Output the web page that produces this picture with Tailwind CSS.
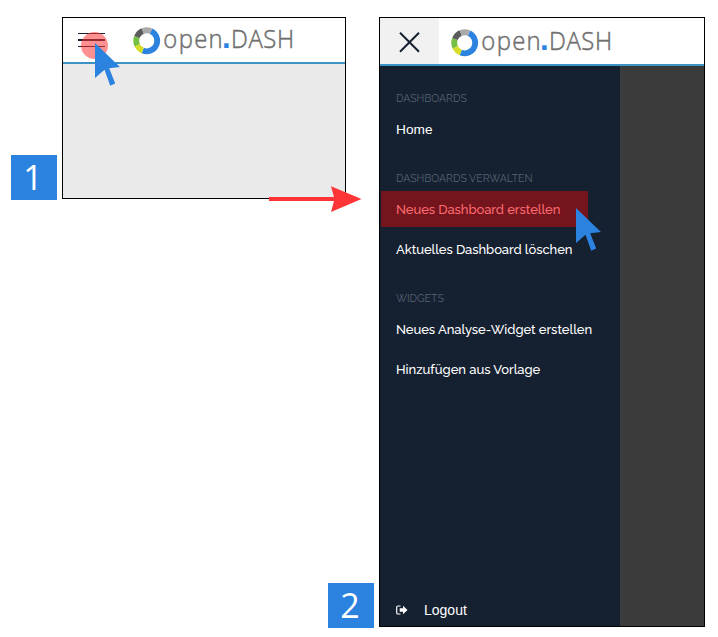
<!DOCTYPE html>
<html lang="de">
<head>
<meta charset="utf-8">
<title>open.DASH</title>
<script src="https://cdn.jsdelivr.net/npm/@tailwindcss/browser@4"></script>
</head>
<body class="bg-white overflow-hidden">
<svg class="hidden">
  <defs>
    <symbol id="logo" viewBox="0 0 166 36">
      <g fill="none" stroke-width="5.8">
        <circle cx="14.7" cy="17.8" r="10.5" pathLength="360" stroke="#2b83df" stroke-dasharray="178 182" transform="rotate(-66 14.7 17.8)"/>
        <circle cx="14.7" cy="17.8" r="10.5" pathLength="360" stroke="#d5dd28" stroke-dasharray="43 317" transform="rotate(112 14.7 17.8)"/>
        <circle cx="14.7" cy="17.8" r="10.5" pathLength="360" stroke="#75c043" stroke-dasharray="46 314" transform="rotate(155 14.7 17.8)"/>
        <circle cx="14.7" cy="17.8" r="10.5" pathLength="360" stroke="#5c5c5c" stroke-dasharray="47 313" transform="rotate(201 14.7 17.8)"/>
        <circle cx="14.7" cy="17.8" r="10.5" pathLength="360" stroke="#a9a9a9" stroke-dasharray="46 314" transform="rotate(248 14.7 17.8)"/>
      </g>
      <g font-family="'Open Sans','Noto Sans',sans-serif" font-weight="300" font-size="26.5" fill="#6f6f6f" stroke="#6f6f6f" stroke-width=".5">
        <text transform="translate(31.3 25) scale(.9 1)" textLength="66" lengthAdjust="spacing">open</text>
        <text x="90" y="25" font-family="'Liberation Sans',sans-serif" font-weight="700" font-size="31" fill="#2b83df" stroke="none">.</text>
        <text transform="translate(98.9 25) scale(.9 1)" textLength="70.3" lengthAdjust="spacing">DASH</text>
      </g>
    </symbol>
    <symbol id="cursor" viewBox="0 0 26 44">
      <path d="M0 0 25 24 14.2 25.3 20.2 40.5 15.2 42.7 9.5 26.8 0 35Z" fill="#2b83df"/>
    </symbol>
  </defs>
</svg>
<main class="relative flex w-[718px] h-[637px] pt-[17px] pl-[11px] items-start font-['Open_Sans','Noto_Sans',sans-serif]">
  <div class="mt-[138px] w-[46px] h-[45px] shrink-0 bg-[#2b83df] text-white text-[34px] leading-[45px] text-center pr-[2px]">1</div>

  <section class="ml-[5px] w-[284px] h-[182px] shrink-0 border border-black bg-[#eaeaea] flex flex-col">
    <header class="h-[46px] bg-white border-b-2 border-[#3a93c4] flex items-start">
      <svg class="mt-[14px] ml-[15px] w-[27px] h-[16px] shrink-0" viewBox="0 0 27 16"><path d="M0 1.5H27M0 14.5H27" stroke="#152030"/><path d="M0 8H27" stroke="#152030" stroke-width="2"/></svg>
      <svg class="mt-[5px] ml-[27px] w-[166px] h-[36px] shrink-0"><use href="#logo"/></svg>
    </header>
  </section>

  <div class="-ml-[18px] mt-[566px] w-[46px] h-[45px] shrink-0 bg-[#2b83df] text-white text-[34px] leading-[45px] text-center pr-[2px]">2</div>

  <section class="ml-[5px] w-[326px] h-[610px] shrink-0 border border-black bg-[#3b3b3b] flex flex-col">
    <header class="h-[48px] shrink-0 bg-white border-b-2 border-[#3a93c4] flex">
      <div class="w-[59px] bg-[#f1f1f1] flex">
        <svg class="ml-[19px] mt-[14px] w-[21px] h-[21px]" viewBox="0 0 21 21"><path d="M1 .7 20 19.7M20 .7 1 19.7" stroke="#152030" stroke-width="2"/></svg>
      </div>
      <svg class="mt-[7px] ml-[11px] w-[166px] h-[36px] shrink-0"><use href="#logo"/></svg>
    </header>
    <nav class="w-[240px] grow bg-[#152030] flex flex-col pt-[22px] font-['Raleway','Lato',sans-serif] font-medium text-white text-[13px] leading-5 whitespace-nowrap">
      <h2 class="h-5 pl-4 text-[10.5px] font-normal text-[#566271]"><span>DASHBOARDS</span></h2>
      <a class="h-[36px] mt-[3px] pl-4 leading-[38px] text-[13.7px] font-['Liberation_Sans',sans-serif]"><span>Home</span></a>
      <h2 class="h-5 mt-[21px] pl-4 text-[10.5px] font-normal text-[#566271]"><span>DASHBOARDS VERWALTEN</span></h2>
      <a class="h-[36px] mt-[3px] ml-px w-[207px] pl-[15px] leading-[38px] bg-[#74141d] text-[#fb6b70]"><span class="tracking-[-0.07px]">Neues Dashboard erstellen</span></a>
      <a class="h-[36px] mt-[4px] pl-4 leading-[38px]"><span class="tracking-[-0.07px]">Aktuelles Dashboard löschen</span></a>
      <h2 class="h-5 mt-[21px] pl-4 text-[10.5px] font-normal text-[#566271]"><span>WIDGETS</span></h2>
      <a class="h-[36px] mt-[3px] pl-4 leading-[38px]"><span class="tracking-[-0.05px]">Neues Analyse-Widget erstellen</span></a>
      <a class="h-[36px] mt-[4px] pl-4 leading-[38px]"><span class="tracking-[-0.03px]">Hinzufügen aus Vorlage</span></a>
      <a class="mt-auto h-[34px] pl-4 flex items-center text-[14px] font-['Liberation_Sans',sans-serif]">
        <svg class="w-3 h-[10px] mt-px" viewBox="0 0 12 10"><path d="M4.5 1H2Q.7 1 .7 2.3V7.7Q.7 9 2 9H4.5" fill="none" stroke="#fff" stroke-width="1.2"/><path d="M3.7 3.2H7V.8L11.5 5 7 9.2V6.8H3.7Z" fill="#fff"/></svg>
        <span class="ml-4 pt-[2px]">Logout</span>
      </a>
    </nav>
  </section>

  <div class="absolute left-[81px] top-[32px] w-[27px] h-[27px] rounded-full bg-[#ff3437]/55"></div>
  <svg class="absolute left-[95px] top-[43px] w-[26px] h-[44px]"><use href="#cursor"/></svg>
  <svg class="absolute left-[576px] top-[208px] w-[26px] h-[44px]"><use href="#cursor"/></svg>
  <svg class="absolute left-[269px] top-[185px] w-[93px] h-[28px]" viewBox="0 0 93 28"><path d="M0 12H65L62 1.3 92.5 14 62 27 65 16H0Z" fill="#ff3437"/></svg>
</main>
</body>
</html>
